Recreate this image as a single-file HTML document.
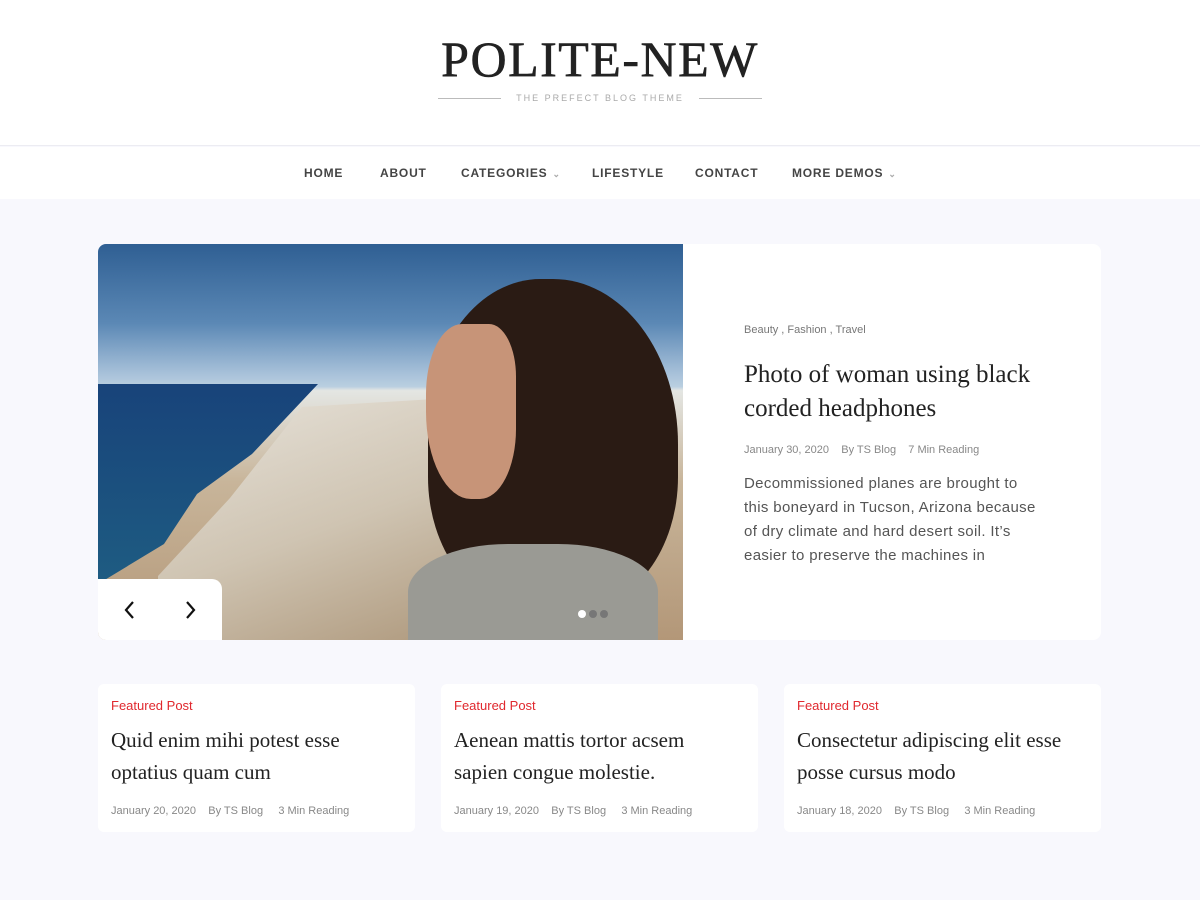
<!DOCTYPE html>
<html><head><meta charset="utf-8"><style>
*{margin:0;padding:0;box-sizing:border-box}
body{width:1200px;height:900px;background:#f8f8fd;font-family:"Liberation Sans",sans-serif;overflow:hidden;position:relative}
.hdr{position:absolute;left:0;top:0;width:1200px;height:146px;background:#fff;border-bottom:1px solid #ececf2}
.logo{position:absolute;left:0;width:1200px;top:30px;text-align:center;font-family:"Liberation Serif",serif;font-size:50px;color:#222;letter-spacing:1.5px;-webkit-text-stroke:0.6px #222}
.tag{position:absolute;left:438px;top:92px;width:324px;height:12px;font-size:9px;color:#aaa;letter-spacing:2px;text-align:center;line-height:12px}
.tag:before,.tag:after{content:"";position:absolute;top:6px;width:63px;height:1px;background:#bbb}
.tag:before{left:0}.tag:after{right:0}
.nav{position:absolute;top:147px;left:0;width:1200px;height:52px;background:#fff}
.nav span{position:absolute;top:19px;font-size:12px;font-weight:bold;color:#444;letter-spacing:0.8px}
.nav i{font-style:normal;color:#aaa;font-size:9px;margin-left:5px}
.hero{position:absolute;left:98px;top:244px;width:1003px;height:396px;background:#fff;border-radius:8px;overflow:hidden}
.img{position:absolute;left:0;top:0;width:585px;height:396px;overflow:hidden;background:linear-gradient(#2f5f93 0%,#5b88b5 20%,#a9c2da 33%,#b9cfe0 36%,#e4e6e3 37%,#c8b59a 60%,#b39778 100%)}
.sea{position:absolute;left:0;top:140px;width:220px;height:200px;background:linear-gradient(#18437a,#1e5c82);clip-path:polygon(0 0,100% 0,70% 35%,45% 55%,30% 80%,0 100%)}
.town{position:absolute;left:60px;top:150px;width:360px;height:260px;background:linear-gradient(160deg,#e8e4dc,#cfc4b2 50%,#a89072);clip-path:polygon(40% 5%,100% 0,100% 100%,0 100%,0 70%,20% 40%)}
.hair{position:absolute;left:330px;top:35px;width:250px;height:330px;background:#2a1b14;border-radius:45% 50% 40% 40%}
.face{position:absolute;left:328px;top:80px;width:90px;height:175px;background:#c79478;border-radius:40% 30% 40% 50%}
.shirt{position:absolute;left:310px;top:300px;width:250px;height:120px;background:#9a9a94;border-radius:40% 40% 0 0}
.ctl{position:absolute;left:0;top:335px;width:124px;height:61px;background:#fff;border-top-right-radius:10px}
.dots{position:absolute;left:480px;top:361px}
.dots b{display:inline-block;width:8px;height:8px;border-radius:50%;background:#777;margin-right:3px}
.txt{position:absolute;left:646px;top:0}
.cat{position:absolute;top:80px;font-size:11px;color:#777;white-space:nowrap}
.ttl{position:absolute;top:114px;width:320px;font-family:"Liberation Serif",serif;font-size:25px;line-height:34px;color:#222}
.meta{position:absolute;top:200px;font-size:11px;color:#888;white-space:nowrap}
.ex{position:absolute;top:228px;width:296px;font-size:15px;line-height:24px;color:#555;letter-spacing:0.35px}
.card{position:absolute;top:684px;width:317px;height:148px;background:#fff;border-radius:6px;padding:0 13px}
.card .f{position:absolute;top:14px;left:13px;font-size:13px;color:#e0282e}
.card .t{position:absolute;top:40px;left:13px;width:270px;font-family:"Liberation Serif",serif;font-size:21px;line-height:32px;color:#222}
.card .m{position:absolute;top:121px;left:13px;font-size:11px;color:#888;white-space:nowrap}
</style></head><body>
<div class="hdr"><div class="logo">POLITE-NEW</div><div class="tag">THE PREFECT BLOG THEME</div></div>
<div class="nav">
<span style="left:304px">HOME</span><span style="left:380px">ABOUT</span><span style="left:461px">CATEGORIES<i>&#8964;</i></span><span style="left:592px">LIFESTYLE</span><span style="left:695px">CONTACT</span><span style="left:792px">MORE DEMOS<i>&#8964;</i></span>
</div>
<div class="hero">
<div class="img"><div class="sea"></div><div class="town"></div><div class="hair"></div><div class="face"></div><div class="shirt"></div>
<div class="ctl"><svg width="124" height="61"><path d="M35 23l-7 8 7 8" stroke="#111" stroke-width="2.2" fill="none"/><path d="M89 23l7 8-7 8" stroke="#111" stroke-width="2.2" fill="none"/></svg></div>
<div class="dots"><b style="background:#fff"></b><b></b><b></b></div></div>
<div class="txt">
<div class="cat">Beauty , Fashion , Travel</div>
<div class="ttl">Photo of woman using black corded headphones</div>
<div class="meta">January 30, 2020 &nbsp;&nbsp; By TS Blog &nbsp;&nbsp; 7 Min Reading</div>
<div class="ex">Decommissioned planes are brought to this boneyard in Tucson, Arizona because of dry climate and hard desert soil. It’s easier to preserve the machines in</div>
</div></div>
<div class="card" style="left:98px"><div class="f">Featured Post</div><div class="t">Quid enim mihi potest esse optatius quam cum</div><div class="m">January 20, 2020 &nbsp;&nbsp; By TS Blog &nbsp;&nbsp;&nbsp; 3 Min Reading</div></div>
<div class="card" style="left:441px"><div class="f">Featured Post</div><div class="t">Aenean mattis tortor acsem sapien congue molestie.</div><div class="m">January 19, 2020 &nbsp;&nbsp; By TS Blog &nbsp;&nbsp;&nbsp; 3 Min Reading</div></div>
<div class="card" style="left:784px"><div class="f">Featured Post</div><div class="t">Consectetur adipiscing elit esse posse cursus modo</div><div class="m">January 18, 2020 &nbsp;&nbsp; By TS Blog &nbsp;&nbsp;&nbsp; 3 Min Reading</div></div>
</body></html>
